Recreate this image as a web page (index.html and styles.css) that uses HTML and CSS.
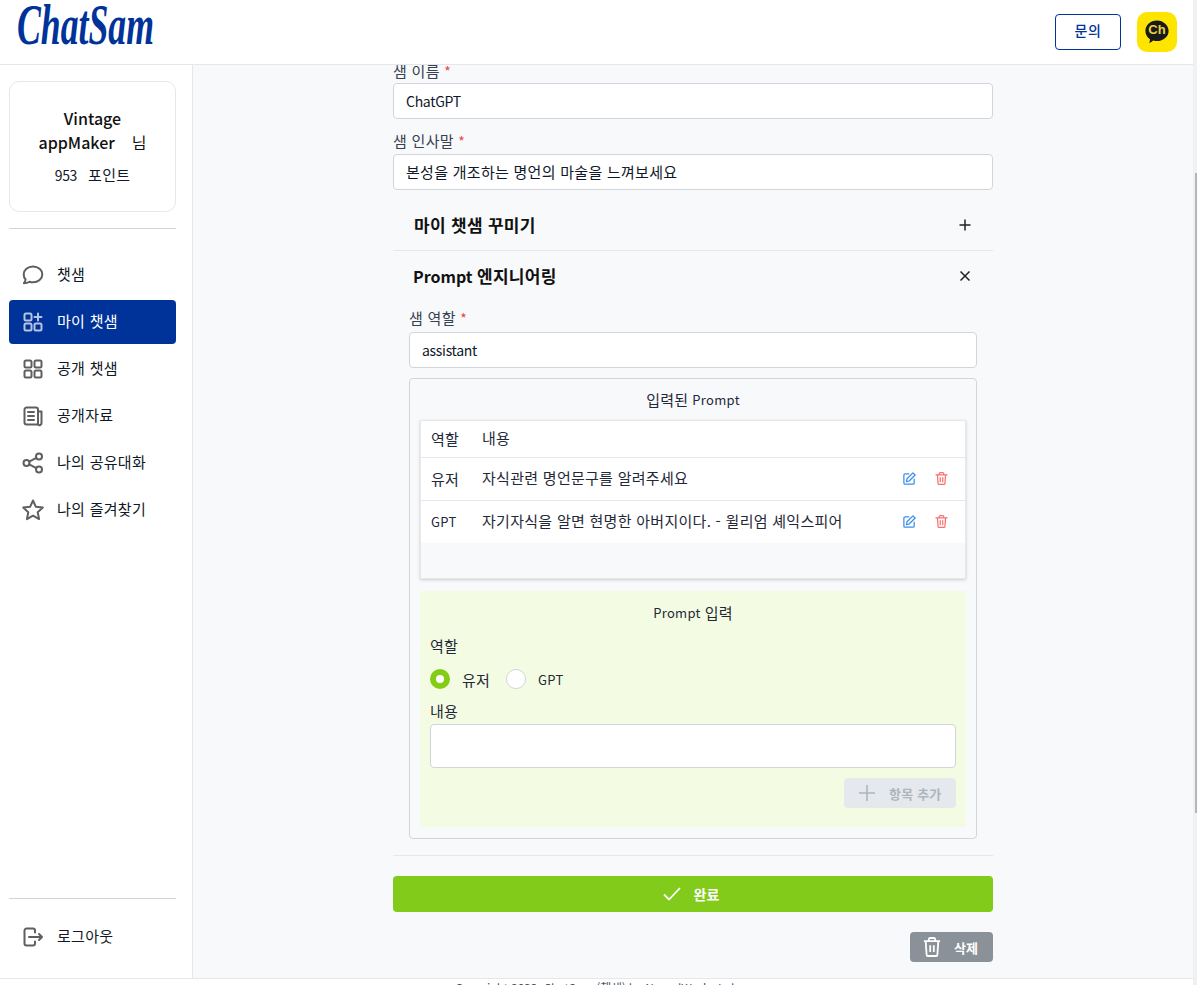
FILE: index.html
```html
<!DOCTYPE html>
<html lang="ko">
<head>
<meta charset="utf-8">
<title>ChatSam</title>
<link rel="stylesheet" href="styles.css">
</head>
<body>
<div class="page">
  <div class="app">
    <header class="topbar">
      <svg class="logo" viewBox="0 0 140 56"><text x="1" y="44" textLength="137" lengthAdjust="spacingAndGlyphs">ChatSam</text></svg>
      <div class="top-actions">
        <button class="ask">문의</button>
        <span class="kakao">
          <svg class="kakao-bubble" viewBox="0 0 28 28"><path d="M14 1.500C7 1.500 1.500 6.500 1.500 12.800c0 3.800 2 7 5 9l-.7 4.200 4.300-2.900c1.300.4 2.600.6 3.900.6 7 0 12.500-5 12.500-10.900S21 1.500 14 1.500z"/></svg>
          <span class="kakao-text">Ch</span>
        </span>
      </div>
    </header>
    <div class="body-row">
      <aside class="sidebar">
        <div class="profile">
          <div class="profile-name">Vintage appMaker<span class="nim">님</span></div>
          <div class="profile-points"><span class="en">953</span><span>포인트</span></div>
        </div>
        <hr class="side-rule">
        <nav class="nav">
          <a class="nav-item"><svg class="ico" viewBox="0 0 24 24"><path d="M12 3.500c5.200 0 9.300 3.500 9.300 7.900s-4.100 7.900-9.300 7.900c-1.200 0-2.400-.2-3.500-.6-1.300.9-3.100 1.500-5.600 1.500 1-1.200 1.600-2.400 1.700-3.700-1.200-1.400-1.900-3.100-1.900-5.100 0-4.400 4.100-7.900 9.300-7.900z"/></svg><span>챗샘</span></a>
          <a class="nav-item active"><svg class="ico" viewBox="0 0 24 24"><rect x="3.500" y="3.500" width="7" height="7" rx="1.500"/><rect x="3.500" y="13.500" width="7" height="7" rx="1.500"/><rect x="13.500" y="13.500" width="7" height="7" rx="1.500"/><path d="M17 3.500v7M13.500 7h7"/></svg><span>마이 챗샘</span></a>
          <a class="nav-item"><svg class="ico" viewBox="0 0 24 24"><rect x="3.500" y="3.500" width="7" height="7" rx="1.500"/><rect x="13.500" y="3.500" width="7" height="7" rx="1.500"/><rect x="3.500" y="13.500" width="7" height="7" rx="1.500"/><rect x="13.500" y="13.500" width="7" height="7" rx="1.500"/></svg><span>공개 챗샘</span></a>
          <a class="nav-item"><svg class="ico" viewBox="0 0 24 24"><path d="M17 20.500H5.500a2 2 0 0 1-2-2v-13a2 2 0 0 1 2-2H15a2 2 0 0 1 2 2v15a2 2 0 0 0 3.500-1.500V7.500H17M7 8h6M7 12h6M7 16h6"/></svg><span>공개자료</span></a>
          <a class="nav-item"><svg class="ico" viewBox="0 0 24 24"><circle cx="5.500" cy="12" r="3"/><circle cx="18" cy="5.500" r="3"/><circle cx="18" cy="18.500" r="3"/><path d="M8.200 10.600l7.100-3.700M8.200 13.400l7.100 3.700"/></svg><span>나의 공유대화</span></a>
          <a class="nav-item"><svg class="ico" viewBox="0 0 24 24"><path d="M12 2.500l2.900 6.300 6.900.8-5.100 4.700 1.400 6.800-6.100-3.400-6.100 3.400 1.400-6.800-5.100-4.700 6.900-.8z"/></svg><span>나의 즐겨찾기</span></a>
        </nav>
        <div class="side-bottom">
          <hr class="side-rule">
          <a class="nav-item logout"><svg class="ico" viewBox="0 0 24 24"><path d="M14 7.500V5.500a2 2 0 0 0-2-2H5.500a2 2 0 0 0-2 2v13a2 2 0 0 0 2 2H12a2 2 0 0 0 2-2v-2M8 12h13M18 9l3 3-3 3"/></svg><span>로그아웃</span></a>
        </div>
      </aside>
      <main class="main">
        <form class="form">
          <label class="label">샘 이름 <i>*</i></label>
          <div class="input"><span class="en">ChatGPT</span></div>
          <label class="label second">샘 인사말 <i>*</i></label>
          <div class="input"><span class="lift">본성을 개조하는 명언의 마술을 느껴보세요</span></div>

          <section class="acc first">
            <h3><span class="ko-h">마이 챗샘 꾸미기</span></h3>
            <svg class="acc-ico" viewBox="0 0 12 12"><path d="M6 .5v11M.5 6h11"/></svg>
          </section>
          <section class="acc-open">
            <div class="acc second-head">
              <h3>Prompt <span class="ko-h">엔지니어링</span></h3>
              <svg class="acc-ico" viewBox="0 0 12 12"><path d="M1.500 1.500l9 9M10.500 1.500l-9 9"/></svg>
            </div>
            <div class="acc-body">
              <label class="label">샘 역할 <i>*</i></label>
              <div class="input"><span class="en">assistant</span></div>
              <div class="prompt-box">
                <div class="box-title"><span class="ko">입력된</span>&nbsp;Prompt</div>
                <div class="table">
                  <div class="row head"><span class="c-role">역할</span><span class="c-text">내용</span></div>
                  <div class="row"><span class="c-role">유저</span><span class="c-text">자식관련 명언문구를 알려주세요</span>
                    <svg class="mini blue" viewBox="0 0 24 24"><path d="M11 4.500H5a2 2 0 0 0-2 2V19a2 2 0 0 0 2 2h12.500a2 2 0 0 0 2-2v-6M17.500 3l3.500 3.500L11.500 16l-4.500 1 1-4.500z"/></svg>
                    <svg class="mini red" viewBox="0 0 24 24"><path d="M3 6h18M8.500 6V4a1.500 1.500 0 0 1 1.500-1.500h4A1.500 1.500 0 0 1 15.500 4v2M5.500 6l1 14a1.500 1.500 0 0 0 1.500 1.500h8a1.500 1.500 0 0 0 1.500-1.500l1-14M10 10.500v6.500M14 10.500v6.500"/></svg>
                  </div>
                  <div class="row last"><span class="c-role en">GPT</span><span class="c-text">자기자식을 알면 현명한 아버지이다. - 윌리엄 셰익스피어</span>
                    <svg class="mini blue" viewBox="0 0 24 24"><path d="M11 4.500H5a2 2 0 0 0-2 2V19a2 2 0 0 0 2 2h12.500a2 2 0 0 0 2-2v-6M17.500 3l3.500 3.500L11.500 16l-4.500 1 1-4.500z"/></svg>
                    <svg class="mini red" viewBox="0 0 24 24"><path d="M3 6h18M8.500 6V4a1.500 1.500 0 0 1 1.500-1.500h4A1.500 1.500 0 0 1 15.500 4v2M5.500 6l1 14a1.500 1.500 0 0 0 1.500 1.500h8a1.500 1.500 0 0 0 1.500-1.500l1-14M10 10.500v6.500M14 10.500v6.500"/></svg>
                  </div>
                  <div class="table-empty"></div>
                </div>
                <div class="entry">
                  <div class="entry-title">Prompt&nbsp;<span class="ko">입력</span></div>
                  <div class="entry-label">역할</div>
                  <div class="radios">
                    <span class="radio on"></span><span class="radio-text">유저</span>
                    <span class="radio"></span><span class="radio-text en">GPT</span>
                  </div>
                  <div class="entry-label content">내용</div>
                  <div class="textarea"></div>
                  <div class="entry-actions">
                    <button type="button" class="add"><svg class="add-ico" viewBox="0 0 16 16"><path d="M8 0v16M0 8h16"/></svg><span>항목 추가</span></button>
                  </div>
                </div>
              </div>
            </div>
          </section>
          <button type="button" class="done"><svg class="done-ico" viewBox="0 0 18 14"><path d="M1 7.500l5 5L17 1"/></svg><span>완료</span></button>
          <div class="delete-row">
            <button type="button" class="delete"><svg class="del-ico" viewBox="0 0 20 22"><path d="M1 4.500h18M6.500 4V2.500A1.500 1.500 0 0 1 8 1h4a1.500 1.500 0 0 1 1.500 1.500V4M3 4.500l1 15A1.500 1.500 0 0 0 5.500 21h9a1.500 1.500 0 0 0 1.500-1.500l1-15M8 9v7.500M12 9v7.500"/></svg><span>삭제</span></button>
          </div>
        </form>
      </main>
    </div>
    <footer class="footer">Copyright 2023. ChatSam (챗샘) by NeuralWorks Lab</footer>
  </div>
  <div class="scrollbar"><div class="thumb"></div></div>
</div>
</body>
</html>
```
FILE: styles.css
```css
* { box-sizing: border-box; }
html, body { margin: 0; height: 100%; overflow: hidden; }
body {
  font-family: "Noto Sans CJK KR", "Noto Sans", sans-serif;
  font-size: 15px;
  letter-spacing: .28px;
  color: #111827;
  background: #fff;
}
.en { font-size: 14px; letter-spacing: -.3px; }
.ko { font-size: 15px; letter-spacing: .28px; }
.lift { margin-bottom: 2px; }
.page { display: flex; height: 985px; }
.app { flex: 1; min-width: 0; display: flex; flex-direction: column; }
.scrollbar { width: 4px; background: #f1f1f1; padding: 173px 0 0 2px; }
.thumb { height: 640px; background: #b5b5b5; }

.topbar {
  height: 65px;
  flex: none;
  display: flex;
  align-items: center;
  justify-content: space-between;
  padding: 0 16px;
  border-bottom: 1px solid #e5e7eb;
  background: #fff;
}
.logo { width: 140px; height: 56px; margin-top: -8px; flex: none; overflow: visible; }
.logo text {
  font-family: "Liberation Serif", serif;
  font-style: italic;
  font-weight: 700;
  font-size: 56px;
  letter-spacing: 0;
  fill: #003399;
}
.top-actions { display: flex; align-items: center; gap: 16px; }
.ask {
  width: 66px;
  height: 36px;
  background: #fff;
  border: 1px solid #003399;
  border-radius: 4px;
  color: #003399;
  font: 500 14px "Noto Sans CJK KR", sans-serif;
  letter-spacing: .5px;
  padding: 0 0 5px;
}
.kakao {
  position: relative;
  width: 40px;
  height: 40px;
  background: #fee500;
  border-radius: 10px;
  display: block;
}
.kakao-bubble { position: absolute; left: 7px; top: 7px; width: 26px; height: 26px; fill: #1a1a1a; }
.kakao-text {
  position: absolute;
  left: 0;
  right: 0;
  top: 9px;
  text-align: center;
  font: 700 13px/18px "Liberation Sans", sans-serif;
  letter-spacing: 0;
  color: #e8d33b;
}

.body-row { flex: 1; min-height: 0; display: flex; }
.sidebar {
  width: 193px;
  flex: none;
  border-right: 1px solid #e5e7eb;
  background: #fff;
  padding: 16px 16px 0 9px;
  display: flex;
  flex-direction: column;
}
.profile {
  height: 131px;
  border: 1px solid #e5e7eb;
  border-radius: 10px;
  padding: 24px 16px 0;
  text-align: center;
}
.profile-name { font-size: 16px; font-weight: 500; line-height: 24px; letter-spacing: 0; color: #111; }
.nim { margin-left: 17px; font-weight: 400; }
.profile-points {
  margin-top: 11px;
  line-height: 20px;
  display: flex;
  justify-content: center;
  gap: 11px;
}
.side-rule { margin: 0; border: 0; border-top: 1px solid #d1d5db; }
.profile + .side-rule { margin-top: 16px; }
.nav { margin-top: 24px; display: flex; flex-direction: column; gap: 3px; }
.nav-item {
  height: 44px;
  display: flex;
  align-items: center;
  gap: 12px;
  padding: 0 0 0 12px;
  border-radius: 4px;
  color: #111827;
}
.nav-item span { margin-bottom: 4px; }
.nav-item.active { background: #003399; color: #fff; }
.ico {
  width: 24px;
  height: 24px;
  fill: none;
  stroke: #5f5f5f;
  stroke-width: 2;
  stroke-linejoin: round;
  stroke-linecap: round;
  flex: none;
}
.active .ico { stroke: #b6c4e2; }
.side-bottom { margin-top: auto; padding-bottom: 19px; }
.logout { margin-top: 16px; }

.main { flex: 1; min-width: 0; overflow: hidden; background: #f8f9fb; display: flex; justify-content: center; }
.form { width: 600px; margin-top: -4px; }
.label { display: block; line-height: 20px; color: #374151; }
.label i { color: #ef4444; font-style: normal; font-size: 14px; }
.input {
  height: 36px;
  margin-top: 2px;
  padding: 0 12px;
  background: #fff;
  border: 1px solid #d1d5db;
  border-radius: 4px;
  display: flex;
  align-items: center;
  color: #111827;
}
.label.second { margin-top: 12px; }
.label.second + .input { margin-top: 3px; }

.acc { display: flex; align-items: center; justify-content: space-between; padding: 0 22px 0 21px; }
.acc h3 { margin: 0; font-size: 16px; font-weight: 700; line-height: 24px; letter-spacing: 0; color: #111; }
.ko-h { font-size: 17px; letter-spacing: .3px; }
.acc.first { height: 61px; padding-top: 9px; border-bottom: 1px solid #e5e7eb; }
.second-head { height: 50px; padding-left: 20px; }
.acc-ico { width: 12px; height: 12px; fill: none; stroke: #222; stroke-width: 1.500; }
.acc-open { padding-bottom: 16px; border-bottom: 1px solid #e5e7eb; }
.acc-body { padding: 7px 16px 0; }
.acc-body .input { margin-top: 4px; }
.prompt-box {
  margin-top: 10px;
  height: 461px;
  border: 1px solid #d1d5db;
  border-radius: 4px;
  padding: 0 10px;
}
.box-title { height: 41px; display: flex; align-items: center; justify-content: center; font-size: 13px; color: #1f2937; letter-spacing: .3px; }
.table {
  height: 159px;
  border: 1px solid #e5e7eb;
  box-shadow: 0 1px 3px rgba(0,0,0,.18);
  display: flex;
  flex-direction: column;
}
.row {
  height: 43px;
  flex: none;
  background: #fff;
  display: flex;
  align-items: center;
  padding: 0 16px 2px 10px;
  border-bottom: 1px solid #e5e7eb;
  color: #1f2937;
}
.row.head { height: 37px; }
.row.last { border-bottom: 0; height: 42px; }
.c-role { width: 51px; flex: none; }
.c-role.en { font-size: 13px; letter-spacing: .3px; }
.c-text { flex: 1; margin-bottom: 1px; }
.mini { width: 15px; height: 15px; fill: none; stroke-width: 2; stroke-linejoin: round; stroke-linecap: round; flex: none; }
.mini.blue { stroke: #3b8fe8; }
.mini.red { stroke: #f87171; margin-left: 17px; }
.table-empty { flex: 1; background: #f8f9fb; }

.entry {
  margin-top: 12px;
  height: 236px;
  background: #f3fce3;
  padding: 0 10px;
}
.entry-title { height: 42px; display: flex; align-items: center; justify-content: center; font-size: 13px; letter-spacing: .3px; color: #1f2937; }
.entry-label { line-height: 20px; margin-top: 3px; color: #1f2937; }
.radios { display: flex; align-items: center; height: 22px; margin-top: 12px; }
.radio {
  width: 20px;
  height: 20px;
  border-radius: 50%;
  background: #fff;
  border: 1px solid #d1d5db;
  flex: none;
}
.radio.on { border: 6px solid #84cc16; }
.radio-text { margin-left: 12px; width: 44px; color: #1f2937; }
.radio-text.en { font-size: 13px; letter-spacing: .3px; }
.entry-label.content { margin-top: 11px; }
.textarea { height: 44px; margin-top: 3px; background: #fff; border: 1px solid #d1d5db; border-radius: 4px; }
.entry-actions { display: flex; justify-content: flex-end; margin-top: 10px; }
.add {
  width: 112px;
  height: 30px;
  border: 0;
  border-radius: 4px;
  background: #e5e9ed;
  color: #adb5bd;
  font: 700 13px "Noto Sans CJK KR", sans-serif;
  letter-spacing: .2px;
  display: flex;
  align-items: center;
  gap: 14px;
  padding: 0 0 0 15px;
}
.add-ico { width: 16px; height: 16px; stroke: #adb5bd; stroke-width: 1.600; fill: none; }
.done {
  width: 100%;
  height: 36px;
  margin-top: 20px;
  border: 0;
  border-radius: 4px;
  background: #82cb1a;
  color: #fff;
  font: 700 14px "Noto Sans CJK KR", sans-serif;
  display: flex;
  align-items: center;
  justify-content: center;
  gap: 13px;
  padding: 0 4px 0 0;
}
.done-ico { width: 18px; height: 14px; fill: none; stroke: #fff; stroke-width: 1.800; }
.delete-row { display: flex; justify-content: flex-end; margin-top: 20px; }
.delete {
  width: 83px;
  height: 30px;
  border: 0;
  border-radius: 4px;
  background: #8a9198;
  color: #fff;
  font: 700 13px "Noto Sans CJK KR", sans-serif;
  display: flex;
  align-items: center;
  gap: 13px;
  padding: 0 0 0 13px;
}
.del-ico { width: 18px; height: 20px; fill: none; stroke: #fff; stroke-width: 2; stroke-linejoin: round; }

.footer {
  height: 7px;
  flex: none;
  overflow: hidden;
  background: #fff;
  border-top: 1px solid #e5e7eb;
  text-align: center;
  font-size: 12px;
  line-height: 18px;
  color: #4b5563;
  letter-spacing: -.2px;
}
```
